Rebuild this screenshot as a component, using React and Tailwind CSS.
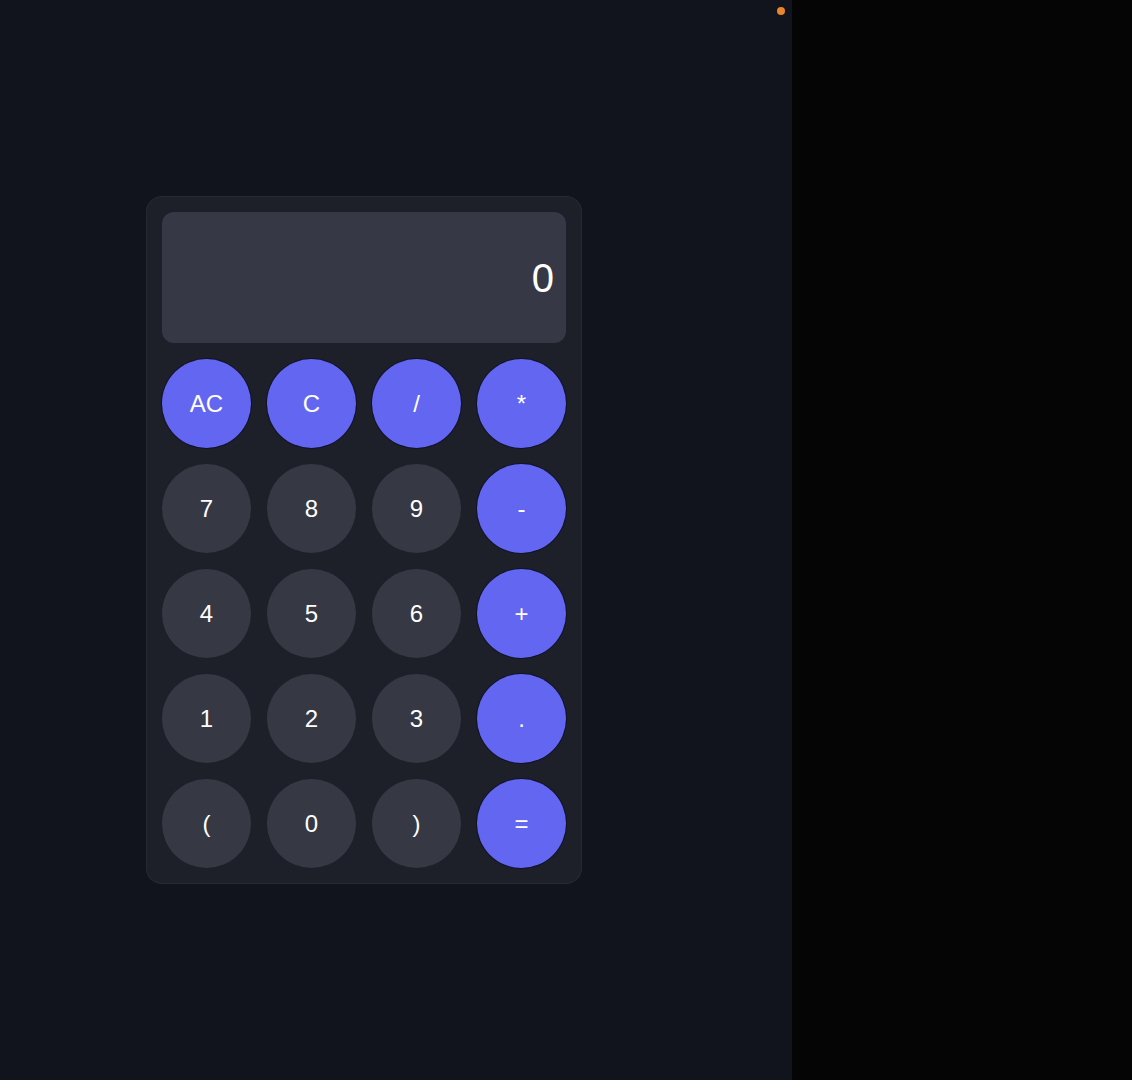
import React, { useState } from "react";

const keys = [
  { label: "AC", accent: true },
  { label: "C", accent: true },
  { label: "/", accent: true },
  { label: "*", accent: true },
  { label: "7" },
  { label: "8" },
  { label: "9" },
  { label: "-", accent: true },
  { label: "4" },
  { label: "5" },
  { label: "6" },
  { label: "+", accent: true },
  { label: "1" },
  { label: "2" },
  { label: "3" },
  { label: ".", accent: true },
  { label: "(" },
  { label: "0" },
  { label: ")" },
  { label: "=", accent: true },
];

const CalcButton = ({ label, accent, onPress }) => (
  <button
    onClick={() => onPress(label)}
    className={
      accent
        ? "aspect-square w-full rounded-full bg-[#6366f1] text-2xl text-white shadow-[0_0_0_1px_rgba(10,12,40,0.6)] flex items-center justify-center"
        : "aspect-square w-full rounded-full bg-[#363844] text-2xl text-white flex items-center justify-center"
    }
  >
    {label}
  </button>
);

const App = () => {
  const [value, setValue] = useState("0");

  const press = (key) => {
    if (key === "AC") return setValue("0");
    if (key === "C") return setValue((v) => (v.length > 1 ? v.slice(0, -1) : "0"));
    if (key === "=") {
      try {
        // eslint-disable-next-line no-new-func
        setValue(String(Function(`return (${value})`)()));
      } catch {
        setValue("Error");
      }
      return;
    }
    setValue((v) => (v === "0" || v === "Error" ? key : v + key));
  };

  return (
    <div className="flex w-full h-[1080px] font-['Liberation_Sans',Arial,sans-serif]">
      <div className="relative w-[792px] h-full bg-[#11141d] flex items-center pl-[146px]">
        <span className="absolute top-[7px] right-[7px] w-2 h-2 rounded-full bg-[#e9852a]" />
        <div className="w-[436px] rounded-2xl bg-[#1d2028] shadow-[inset_0_0_0_1px_#262932] p-4 flex flex-col gap-4">
          <div className="h-[131px] rounded-xl bg-[#363845] flex items-center justify-end px-3">
            <span className="text-[40px] text-white leading-none">{value}</span>
          </div>
          <div className="grid grid-cols-4 gap-4">
            {keys.map((k, i) => (
              <CalcButton key={i} label={k.label} accent={k.accent} onPress={press} />
            ))}
          </div>
        </div>
      </div>
      <div className="flex-1 h-full bg-[#050505]" />
    </div>
  );
};

export default App;
